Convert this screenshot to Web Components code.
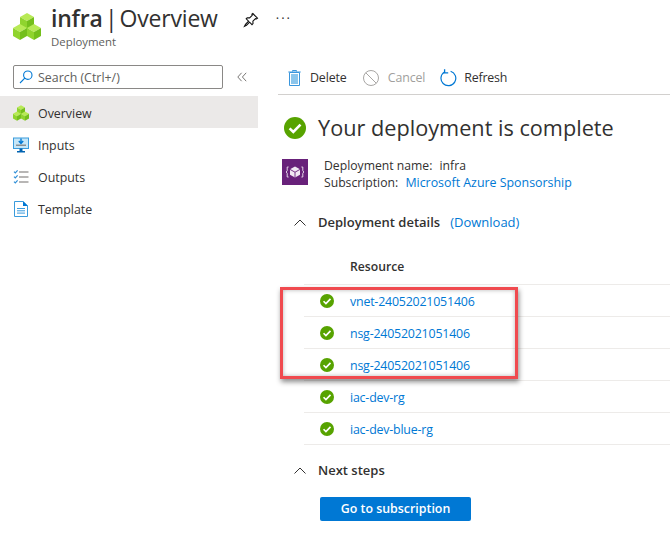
<!DOCTYPE html>
<html>
<head>
<meta charset="utf-8">
<title>infra | Overview</title>
<style>
    html, body { margin: 0; padding: 0; background: #fff; overflow: hidden; }
    body { font-family: "Open Sans", "Liberation Sans", sans-serif; color: #323130; height: 543px; }
</style>
</head>
<body>
<deployment-page></deployment-page>

<script>
const cube = (x, y) => `
    <polygon points="${x + 7},${y} ${x + 14},${y + 4} ${x + 7},${y + 8} ${x},${y + 4}" fill="#b8ea55"/>
    <polygon points="${x},${y + 4} ${x + 7},${y + 8} ${x + 7},${y + 16} ${x},${y + 12}" fill="#90d42e"/>
    <polygon points="${x + 14},${y + 4} ${x + 7},${y + 8} ${x + 7},${y + 16} ${x + 14},${y + 12}" fill="#74bf1c"/>`

const icons = {
    cubes: `<svg viewBox="0 0 28 27" width="100%" height="100%">${cube(7, 0)}${cube(0, 11)}${cube(14, 11)}</svg>`,
    check: `<svg viewBox="0 0 22 22" width="100%" height="100%"><circle cx="11" cy="11" r="11" fill="#57a300"/><path d="M5.6 11.4l3.7 3.6 7.2-7.4" fill="none" stroke="#fff" stroke-width="2.6"/></svg>`,
    pin: `<svg viewBox="0 0 16 16" width="16" height="16" fill="none" stroke="#111" stroke-width="1.1"><path d="M9.8 1.5l4.7 4.7-1 .7-1-.3-2.6 2.6.1 2.4-1 1-2.4-2.4-3.1 3.1-2 1 1-2 3.1-3.1-2.4-2.4 1-1 2.4.1 2.6-2.6-.3-1z"/></svg>`,
    search: `<svg viewBox="0 0 14 14" width="14" height="14" fill="none" stroke="#0078d4" stroke-width="1.1"><circle cx="8.8" cy="5.2" r="4.2"/><path d="M5.8 8.2L1 13"/></svg>`,
    collapse: `<svg viewBox="0 0 10 10" width="10" height="10" fill="none" stroke="#797775" stroke-width="1"><path d="M4.6 .8L.8 5l3.8 4.2M9.2 .8L5.4 5l3.8 4.2"/></svg>`,
    inputs: `<svg viewBox="0 0 16 16" width="16" height="16"><rect x=".5" y="1" width="15" height="10.5" fill="#c5e6f8" stroke="#3a9bdc"/><rect x="3" y="7.6" width="10" height="1.2" fill="#7a7a7a"/><path d="M8 1.5v4M5.8 4L8 6.4 10.2 4" fill="none" stroke="#0078d4" stroke-width="1.4"/><rect x="6.5" y="11.5" width="3" height="2.5" fill="#0063b1"/><rect x="4" y="14" width="8" height="1.5" fill="#0063b1"/></svg>`,
    outputs: `<svg viewBox="0 0 16 16" width="16" height="16" fill="none"><path d="M1 2.6l1.3 1.3L4.6 1.4M1 7.6l1.3 1.3 2.3-2.5M1 12.6l1.3 1.3 2.3-2.5" stroke="#2f8fd8" stroke-width="1.2"/><path d="M6 3h9.5M6 8h9.5M6 13h9.5" stroke="#a19f9d" stroke-width="1.5"/></svg>`,
    template: `<svg viewBox="0 0 14 16" width="14" height="16"><path d="M.5.5h8.5l4.5 4.5v10.5H.5z" fill="#fff" stroke="#3a9bdc"/><path d="M9 0v5h5z" fill="#0078d4"/><path d="M3 7.5h8M3 9.8h8M3 12.1h8" stroke="#3a9bdc"/></svg>`,
    trash: `<svg viewBox="0 0 13 16" width="13" height="16"><path d="M4.5 1.5V.5h4v1M.3 2h12.4" fill="none" stroke="#3a96dd"/><path d="M1.5 2.5h10v13h-10z" fill="#fff" stroke="#3a96dd"/><rect x="3" y="4" width="7" height="10" fill="#8cc6ec"/></svg>`,
    cancel: `<svg viewBox="0 0 16 16" width="16" height="16" fill="none" stroke="#a8a6a4" stroke-width="1"><circle cx="8" cy="8" r="7.5"/><path d="M2.7 2.7l10.6 10.6"/></svg>`,
    refresh: `<svg viewBox="0 0 17 18" width="17" height="18" fill="none" stroke="#0078d4" stroke-width="1.2"><path d="M10.6 2.2a7.4 7.4 0 1 1-6 .7"/><path d="M4.6 .2v3.6h3.6" stroke-width="1.3"/></svg>`,
    chevron: `<svg viewBox="0 0 12 7" width="12" height="7" fill="none" stroke="#323130" stroke-width="1"><path d="M.5 6.5L6 1l5.5 5.5"/></svg>`,
    template3d: `<svg viewBox="0 0 26 26" width="26" height="26"><rect width="26" height="26" fill="#68217a"/><path d="M13 7.5l5 2.8v5.4l-5 2.8-5-2.8v-5.4z" fill="#f0e8f2"/><path d="M13 13.2v5.2M8 10.4l5 2.8 5-2.8" stroke="#68217a" fill="none" stroke-width=".9"/><path d="M6.6 8H5.2v3.7l-1 1.3 1 1.3V18h1.4M19.4 8h1.4v3.7l1 1.3-1 1.3V18h-1.4" fill="none" stroke="#e3d5e7" stroke-width="1"/></svg>`
}

class PageHeader extends HTMLElement {
    constructor() {
        super()
        this.attachShadow({ mode: "open" })
        this.shadowRoot.innerHTML = `
        <style>
            :host { display: flex; height: 60px; box-sizing: border-box; padding: 5px 0 0 13px; }
            .logo { width: 28px; height: 27px; margin-top: 8px; }
            .titles { margin-left: 10px; }
            h1 { margin: 0; font-size: 23px; line-height: 26px; font-weight: 400; white-space: nowrap; letter-spacing: -0.2px; word-spacing: -3.5px; }
            b { font-weight: 600; }
            .sub { font-size: 11.4px; line-height: 16px; margin-top: 3px; color: #605e5c; }
            .pin { margin: 6px 0 0 25px; }
            .dots { margin: 5px 0 0 17px; font-size: 13px; line-height: 16px; letter-spacing: 2px; }
        </style>
        <div class="logo">${icons.cubes}</div>
        <div class="titles">
            <h1><b>infra</b> | Overview</h1>
            <div class="sub">Deployment</div>
        </div>
        <div class="pin">${icons.pin}</div>
        <div class="dots">···</div>
        `
    }
}

class SideNav extends HTMLElement {
    constructor() {
        super()
        this.attachShadow({ mode: "open" })
        this.shadowRoot.innerHTML = `
        <style>
            :host { display: block; width: 258px; flex: none; padding-top: 5px; }
            .search-row { display: flex; align-items: center; padding-left: 13px; margin-bottom: 7px; }
            .search { width: 210px; height: 24px; box-sizing: border-box; border: 1px solid #8a8886; border-radius: 2px;
                display: flex; align-items: center; gap: 5px; padding-left: 5px; font-size: 12.4px; color: #605e5c; }
            .collapse { margin-left: 14px; display: flex; }
        </style>
        <div class="search-row">
            <div class="search">${icons.search}<span>Search (Ctrl+/)</span></div>
            <div class="collapse">${icons.collapse}</div>
        </div>
        <slot></slot>
        `
    }
}

class NavItem extends HTMLElement {
    constructor() {
        super()
        this.attachShadow({ mode: "open" })
        this.shadowRoot.innerHTML = `
        <style>
            :host { display: flex; align-items: center; height: 32px; box-sizing: border-box; padding: 2px 0 0 13px; font-size: 12.4px; }
            :host([active]) { background: #ebe9e8; }
            .icon { width: 16px; height: 16px; margin-right: 9px; display: flex; align-items: center; justify-content: center; }
        </style>
        <span class="icon">${icons[this.getAttribute("icon")]}</span>
        <slot></slot>
        `
    }
}

class ToolBar extends HTMLElement {
    constructor() {
        super()
        this.attachShadow({ mode: "open" })
        this.shadowRoot.innerHTML = `
        <style>
            :host { display: flex; height: 35px; box-sizing: border-box; border-bottom: 1px solid #d2d0ce; padding: 1px 0 0 10px; align-items: center; }
        </style>
        <slot></slot>
        `
    }
}

class ToolButton extends HTMLElement {
    constructor() {
        super()
        this.attachShadow({ mode: "open" })
        this.shadowRoot.innerHTML = `
        <style>
            :host { display: flex; align-items: center; font-size: 12.4px; gap: 9px; margin-right: 16px; letter-spacing: -0.12px; }
            :host([disabled]) { color: #a19f9d; }
            :host([icon="refresh"]) { margin-left: -1px; gap: 7px; letter-spacing: -0.2px; }
        </style>
        ${icons[this.getAttribute("icon")]}
        <slot></slot>
        `
    }
}

class SectionHead extends HTMLElement {
    constructor() {
        super()
        this.attachShadow({ mode: "open" })
        this.shadowRoot.innerHTML = `
        <style>
            :host { display: flex; align-items: center; padding-left: 16px; font-size: 13px; font-weight: 600; height: 18px; }
            svg { margin-right: 12px; }
        </style>
        ${icons.chevron}
        <slot></slot>
        `
    }
}

class ResourceRow extends HTMLElement {
    constructor() {
        super()
        this.attachShadow({ mode: "open" })
        this.shadowRoot.innerHTML = `
        <style>
            :host { display: flex; align-items: center; height: 32px; box-sizing: border-box; border-bottom: 1px solid #edebe9;
                margin-left: 26px; padding: 1px 0 0 16px; font-size: 12.4px; letter-spacing: -0.2px; color: #0078d4; }
            .check { width: 14px; height: 14px; margin-right: 16px; }
        </style>
        <div class="check">${icons.check}</div>
        <slot></slot>
        `
    }
}

class ResourceTable extends HTMLElement {
    constructor() {
        super()
        this.attachShadow({ mode: "open" })
        this.shadowRoot.innerHTML = `
        <style>
            :host { display: block; position: relative; }
            .head { height: 54px; box-sizing: border-box; border-bottom: 1px solid #edebe9; margin-left: 26px; padding: 27px 0 0 46px;
                font-size: 12.2px; font-weight: 600; line-height: 18px; }
            .mark { position: absolute; left: 2px; top: 56px; width: 238px; height: 92px; box-sizing: border-box;
                border: 3px solid #f04a4f; box-shadow: 1px 3px 5px rgba(0,0,0,.45), inset 0 0 4px rgba(0,0,0,.3); pointer-events: none; }
        </style>
        <div class="head">Resource</div>
        <slot></slot>
        <div class="mark"></div>
        `
    }
}

class DeploymentMain extends HTMLElement {
    constructor() {
        super()
        this.attachShadow({ mode: "open" })
        this.shadowRoot.innerHTML = `
        <style>
            :host { display: block; flex: 1; margin-left: 20px; }
            .done { display: flex; align-items: center; gap: 12px; margin: 22px 0 0 6px; height: 22px; }
            .done .check { width: 22px; height: 22px; }
            h2 { margin: -2px 0 0; font-size: 21.7px; font-weight: 400; white-space: nowrap; }
            .info { display: flex; margin: 20px 0 0 4px; }
            .info .text { margin-left: 16px; font-size: 12.2px; line-height: 17px; margin-top: -2px; }
            a { color: #0078d4; text-decoration: none; font-weight: 400; }
            .name { margin-left: 4px; }
            .sub { margin-left: 4px; font-size: 12.4px; }
            .details { margin-top: 22px; }
            .next { margin-top: 16px; }
            .dl { margin-left: 10px; }
            .go { display: block; width: 151px; height: 24px; margin: 18px 0 0 42px; background: #0078d4; color: #fff; border-radius: 2px;
                font-size: 12.4px; font-weight: 600; line-height: 24px; text-align: center; }
        </style>
        <slot name="toolbar"></slot>
        <div class="done"><div class="check">${icons.check}</div><h2>Your deployment is complete</h2></div>
        <div class="info">
            ${icons.template3d}
            <div class="text">
                <div>Deployment name: <span class="name">infra</span></div>
                <div>Subscription: <a class="sub">Microsoft Azure Sponsorship</a></div>
            </div>
        </div>
        <section-head class="details">Deployment details<a class="dl">(Download)</a></section-head>
        <slot></slot>
        <section-head class="next">Next steps</section-head>
        <div class="go">Go to subscription</div>
        `
    }
}

class DeploymentPage extends HTMLElement {
    constructor() {
        super()
        this.attachShadow({ mode: "open" })
        this.shadowRoot.innerHTML = `
        <style>
            :host { display: block; width: 670px; height: 543px; overflow: hidden; }
            .body { display: flex; }
        </style>
        <page-header></page-header>
        <div class="body">
            <side-nav>
                <nav-item icon="cubes" active>Overview</nav-item>
                <nav-item icon="inputs">Inputs</nav-item>
                <nav-item icon="outputs">Outputs</nav-item>
                <nav-item icon="template">Template</nav-item>
            </side-nav>
            <deployment-main>
                <tool-bar slot="toolbar">
                    <tool-button icon="trash">Delete</tool-button>
                    <tool-button icon="cancel" disabled>Cancel</tool-button>
                    <tool-button icon="refresh">Refresh</tool-button>
                </tool-bar>
                <resource-table>
                    <resource-row>vnet-24052021051406</resource-row>
                    <resource-row>nsg-24052021051406</resource-row>
                    <resource-row>nsg-24052021051406</resource-row>
                    <resource-row>iac-dev-rg</resource-row>
                    <resource-row>iac-dev-blue-rg</resource-row>
                </resource-table>
            </deployment-main>
        </div>
        `
    }
}

customElements.define("page-header", PageHeader)
customElements.define("side-nav", SideNav)
customElements.define("nav-item", NavItem)
customElements.define("tool-bar", ToolBar)
customElements.define("tool-button", ToolButton)
customElements.define("section-head", SectionHead)
customElements.define("resource-row", ResourceRow)
customElements.define("resource-table", ResourceTable)
customElements.define("deployment-main", DeploymentMain)
customElements.define("deployment-page", DeploymentPage)
</script>
</body>
</html>
